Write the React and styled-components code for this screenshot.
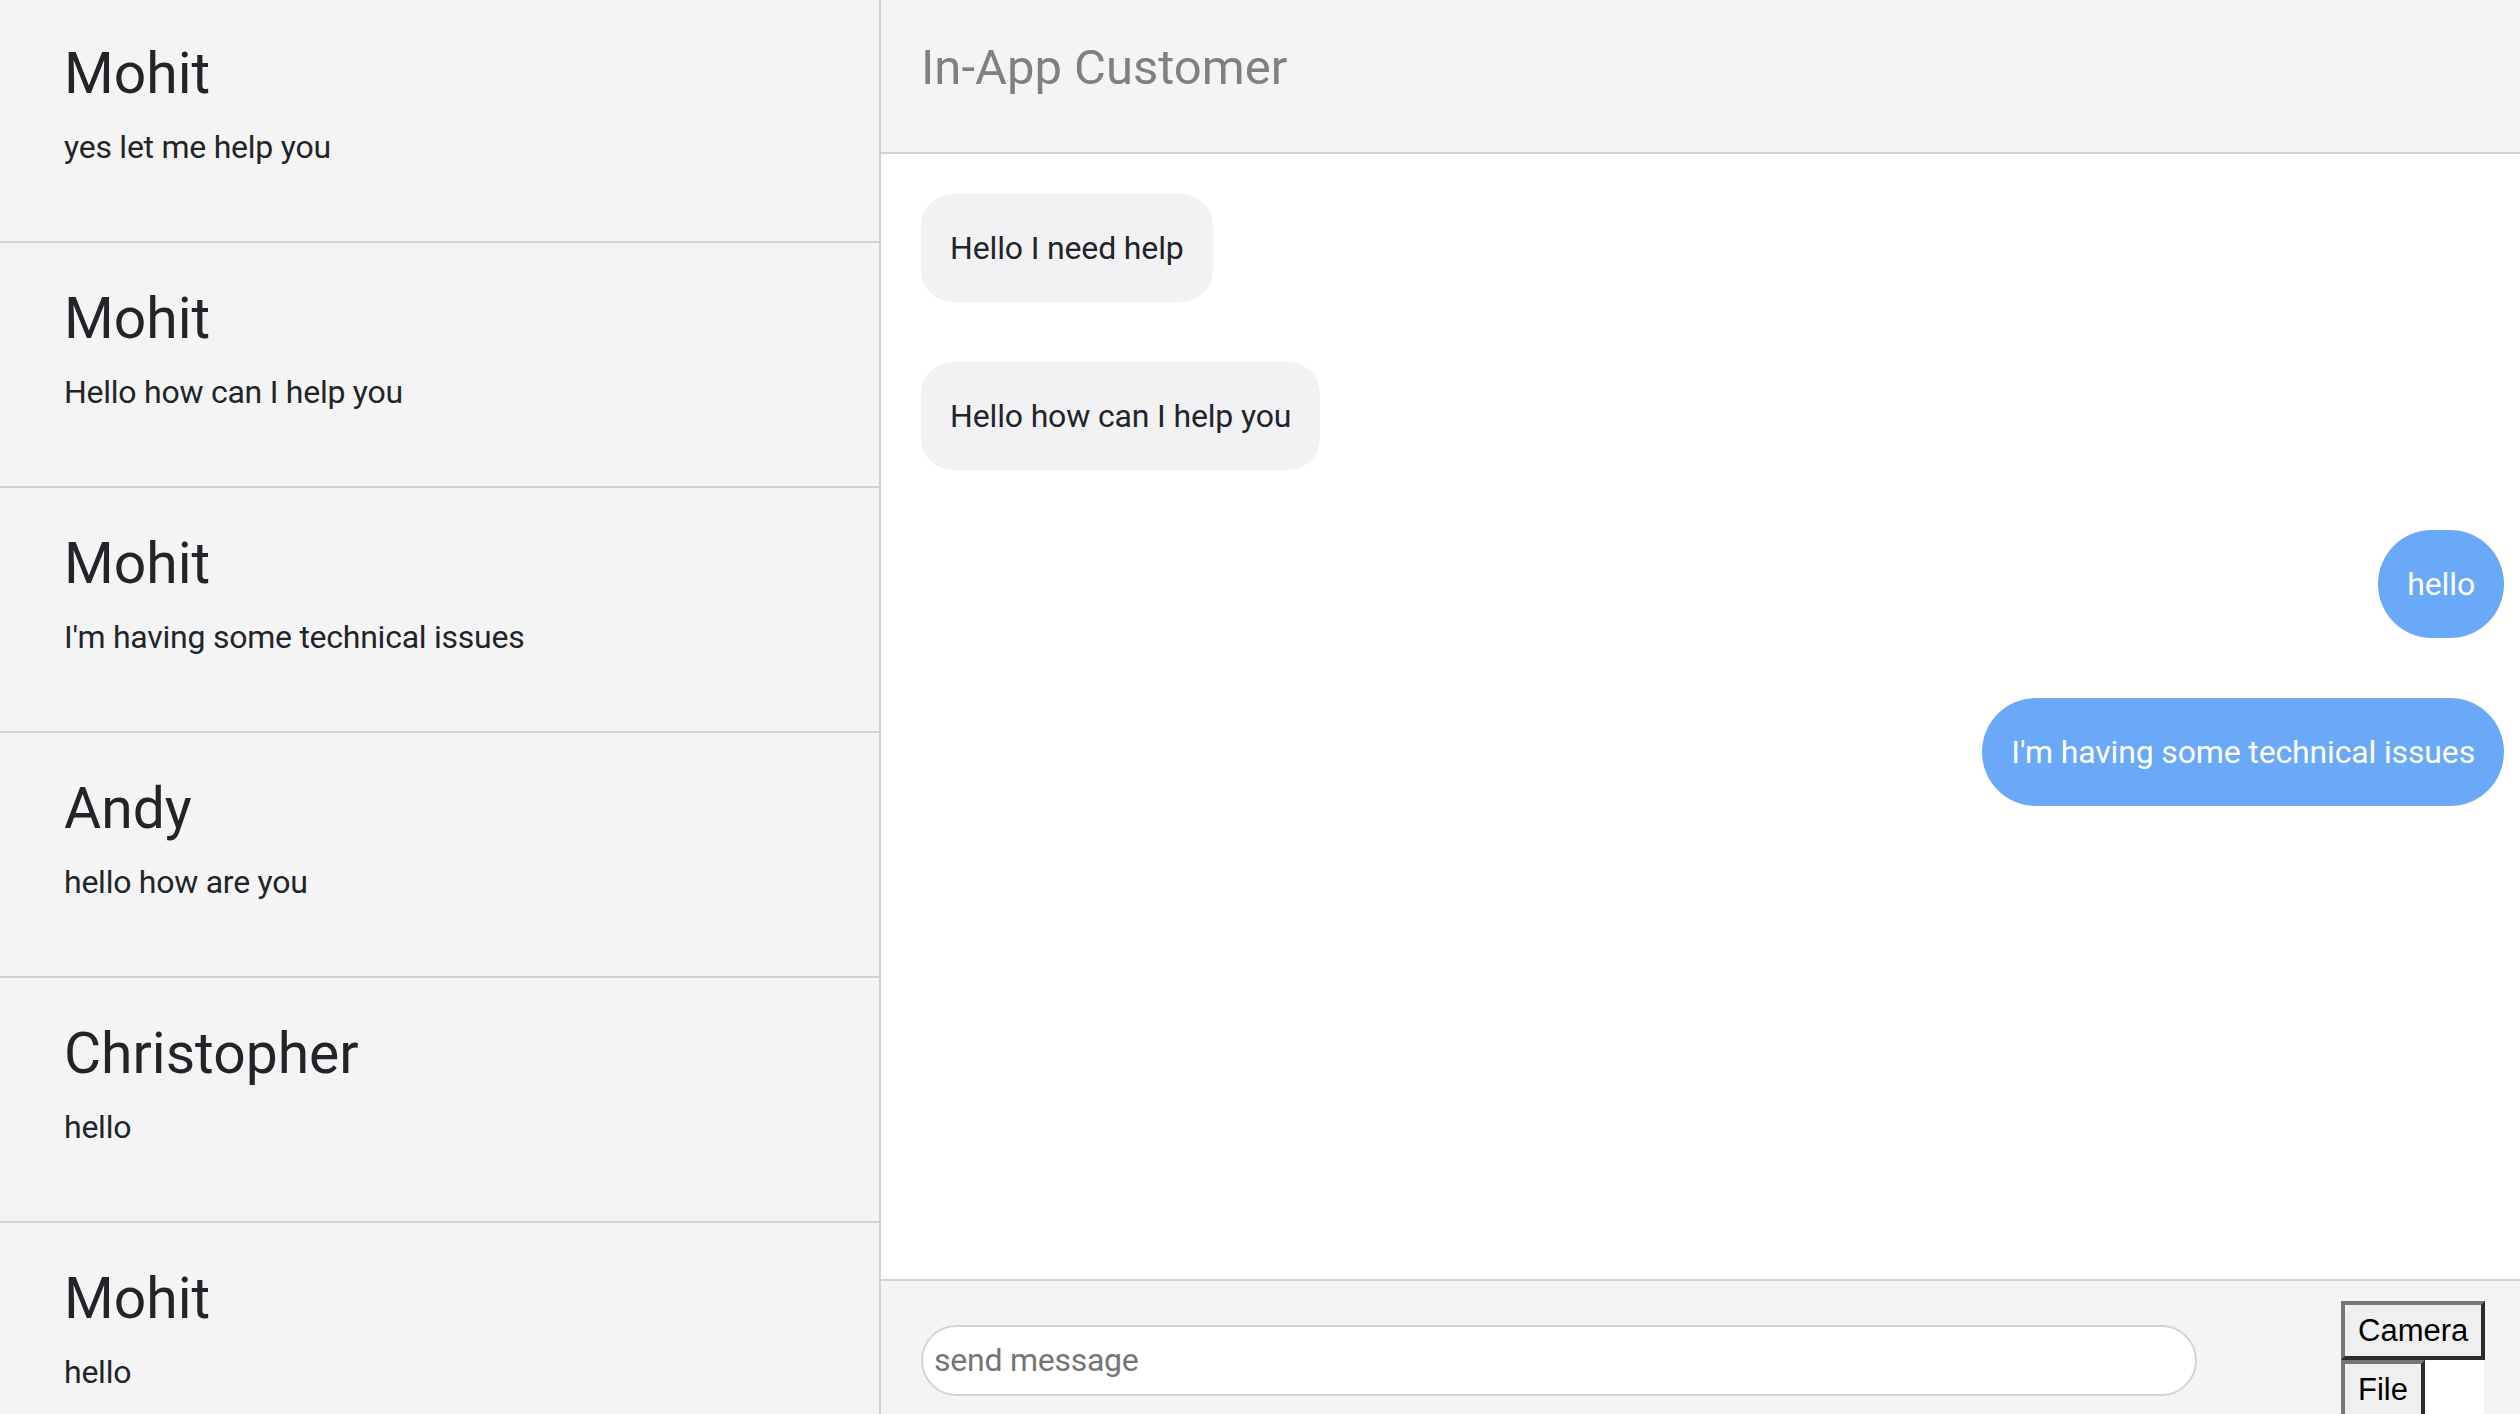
import styled, { createGlobalStyle } from 'styled-components';

const GlobalStyle = createGlobalStyle`
  html, body {
    margin: 0;
    padding: 0;
    height: 100%;
    overflow: hidden;
  }
  body {
    font-family: Roboto, "Liberation Sans", Arial, sans-serif;
    color: #212529;
    background: #ffffff;
  }
`;

const chats = [
  { name: 'Mohit', last: 'yes let me help you' },
  { name: 'Mohit', last: 'Hello how can I help you' },
  { name: 'Mohit', last: "I'm having some technical issues" },
  { name: 'Andy', last: 'hello how are you' },
  { name: 'Christopher', last: 'hello' },
  { name: 'Mohit', last: 'hello' },
];

const messages = [
  { text: 'Hello I need help', mine: false },
  { text: 'Hello how can I help you', mine: false },
  { text: 'hello', mine: true },
  { text: "I'm having some technical issues", mine: true },
];

// layout
const Page = styled.div`
  display: grid;
  grid-template-columns: 881px 1fr;
  height: 100vh;
  overflow: hidden;
`;

const Sidebar = styled.aside`
  background: #f4f4f4;
  border-right: 2px solid #d3d3d3;
  overflow: hidden;
`;

// list is scrolled a couple of pixels
const ChatList = styled.div`
  margin-top: -2.5px;
`;

const ChatItem = styled.div`
  box-sizing: border-box;
  height: 245px;
  padding: 43.5px 64px 0;
  border-bottom: 2px solid #d3d3d3;
`;

const ChatName = styled.h1`
  margin: 0;
  font-size: 57px;
  font-weight: 400;
  line-height: 66px;
  color: #212529;
`;

const ChatPreview = styled.p`
  margin: 21px 0 0;
  font-size: 32px;
  line-height: 38px;
  letter-spacing: -0.25px;
  color: #212529;
`;

const Conversation = styled.section`
  display: flex;
  flex-direction: column;
  min-width: 0;
  height: calc(100vh + 25px);
  overflow: hidden;
`;

const Header = styled.header`
  box-sizing: border-box;
  height: 154px;
  flex-shrink: 0;
  padding: 39px 40px 0;
  background: #f4f4f4;
  border-bottom: 2px solid #d3d3d3;
`;

const Title = styled.h2`
  margin: 0;
  font-size: 49px;
  font-weight: 400;
  line-height: 58px;
  color: #808080;
`;

const Messages = styled.div`
  flex: 1;
  display: flex;
  flex-direction: column;
  gap: 60px;
  padding: 40px 16px 0 40px;
  background: #ffffff;
  overflow: hidden;
`;

const Bubble = styled.div`
  align-self: ${(p) => (p.$mine ? 'flex-end' : 'flex-start')};
  padding: 35px 29px;
  font-size: 32px;
  line-height: 38px;
  letter-spacing: -0.15px;
  border-radius: ${(p) => (p.$mine ? '999px' : '32px')};
  background: ${(p) => (p.$mine ? '#6aa9f7' : '#f2f2f4')};
  color: ${(p) => (p.$mine ? '#ffffff' : '#212529')};
`;

const Composer = styled.footer`
  flex-shrink: 0;
  display: flex;
  align-items: center;
  justify-content: space-between;
  padding: 20px 36px 20px 40px;
  background: #f4f4f4;
  border-top: 2px solid #d3d3d3;
`;

const MessageInput = styled.input`
  box-sizing: border-box;
  width: 1276px;
  height: 71px;
  padding: 0 11px;
  border: 2px solid #d3d3d3;
  border-radius: 999px;
  background: #ffffff;
  font-family: Roboto, "Liberation Sans", Arial, sans-serif;
  font-size: 32px;
  letter-spacing: -0.25px;
  color: #212529;
  caret-color: #000000;
  outline: none;

  &::placeholder {
    color: #757575;
  }
`;

const Attachments = styled.div`
  display: flex;
  flex-direction: column;
  align-items: flex-start;
  width: 143px;
  background: #ffffff;
`;

const AttachButton = styled.button`
  padding: 8px 13px;
  font-family: "Liberation Sans", Arial, sans-serif;
  font-size: 31px;
  line-height: 35px;
  color: #000000;
  background: #efefef;
  border-width: 4px;
  border-style: solid;
  border-color: #767676 #2b2b2b #2b2b2b #767676;
  border-radius: 0;
  cursor: pointer;
`;

export default function App() {
  return (
    <>
      <GlobalStyle />
      <Page>
        <Sidebar>
          <ChatList>
            {chats.map((chat, i) => (
              <ChatItem key={i}>
                <ChatName>{chat.name}</ChatName>
                <ChatPreview>{chat.last}</ChatPreview>
              </ChatItem>
            ))}
          </ChatList>
        </Sidebar>
        <Conversation>
          <Header>
            <Title>In-App Customer</Title>
          </Header>
          <Messages>
            {messages.map((m, i) => (
              <Bubble key={i} $mine={m.mine}>
                {m.text}
              </Bubble>
            ))}
          </Messages>
          <Composer>
            <MessageInput placeholder="send message" autoFocus />
            <Attachments>
              <AttachButton>Camera</AttachButton>
              <AttachButton>File</AttachButton>
            </Attachments>
          </Composer>
        </Conversation>
      </Page>
    </>
  );
}
